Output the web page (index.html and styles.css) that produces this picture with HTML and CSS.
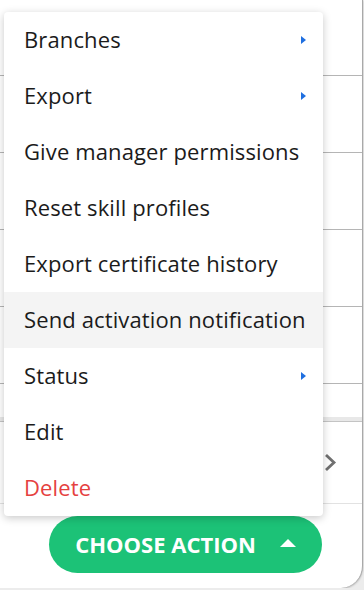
FILE: index.html
```html
<!DOCTYPE html>
<html lang="en">
<head>
    <meta charset="UTF-8">
    <meta name="viewport" content="width=device-width, initial-scale=1.0">
    <title>Choose action</title>
    <link rel="stylesheet" href="styles.css">
</head>
<body>

    <div class="screen">
        <!-- Table rows behind the menu -->
        <div class="table">
            <div class="table-row"></div>
            <div class="table-row"></div>
            <div class="table-row"></div>
            <div class="table-row"></div>
            <div class="table-row"></div>
        </div>
        <div class="table-tail"></div>
        <div class="strip"></div>

        <!-- Bottom card -->
        <div class="card">
            <div class="card-row">
                <svg class="chevron" width="13" height="19" viewBox="0 0 13 19">
                    <path d="M2 2 L10 9.5 L2 17" fill="none" stroke="#707070" stroke-width="2.8"/>
                </svg>
            </div>
            <div class="card-footer">
                <button class="action-btn">
                    <span>CHOOSE ACTION</span>
                    <svg class="caret-up" width="16" height="8" viewBox="0 0 16 8">
                        <path d="M0 8 L8 0 L16 8 Z" fill="#fff"/>
                    </svg>
                </button>
            </div>
        </div>

        <!-- Action menu -->
        <ul class="menu">
            <li class="menu-item has-sub">Branches<span class="sub-arrow"></span></li>
            <li class="menu-item has-sub">Export<span class="sub-arrow"></span></li>
            <li class="menu-item">Give manager permissions</li>
            <li class="menu-item">Reset skill profiles</li>
            <li class="menu-item">Export certificate history</li>
            <li class="menu-item active">Send activation notification</li>
            <li class="menu-item has-sub">Status<span class="sub-arrow"></span></li>
            <li class="menu-item">Edit</li>
            <li class="menu-item danger">Delete</li>
        </ul>
    </div>

</body>
</html>
```

FILE: styles.css
```css
/* Global Styles */
body {
    margin: 0;
    background-color: #ececec;
    font-family: 'Open Sans', sans-serif;
}

.screen {
    position: relative;
    width: 362px;
    height: 588px;
    background-color: #ffffff;
    border-right: 1px solid #a9a9a9;
    border-bottom-right-radius: 22px;
    box-shadow: 0 1px 2px rgba(0, 0, 0, 0.25);
    overflow: hidden;
}

/* Table behind */
.table {
    margin-top: -1px;
}

.table-row {
    height: 77px;
    box-sizing: border-box;
    border-bottom: 1px solid #b5b5b5;
}

.table-tail {
    height: 33px;
}

.strip {
    height: 4px;
    background-color: #e8e8e8;
}

/* Bottom card */
.card {
    border-top: 1px solid #c4c4c4;
}

.card-row {
    height: 81px;
    border-bottom: 1px solid #e2e2e2;
    display: flex;
    align-items: center;
    justify-content: flex-end;
    padding-right: 25px;
}

.card-footer {
    display: flex;
    justify-content: flex-end;
    padding: 12px 40px 0 0;
}

.action-btn {
    width: 273px;
    height: 57px;
    border: none;
    border-radius: 29px;
    background-color: #1cc277;
    color: #ffffff;
    font-family: 'Open Sans', sans-serif;
    font-size: 22px;
    font-weight: 700;
    display: flex;
    align-items: center;
    justify-content: center;
    gap: 24px;
    padding: 0 0 2px 0;
}

.caret-up {
    margin-top: -1px;
}

/* Action menu */
.menu {
    position: absolute;
    top: 12px;
    left: 4px;
    width: 319px;
    margin: 0;
    padding: 0;
    list-style: none;
    background-color: #ffffff;
    border-radius: 4px;
    box-shadow: 0 2px 8px rgba(0, 0, 0, 0.22);
}

.menu-item {
    height: 56px;
    box-sizing: border-box;
    display: flex;
    align-items: center;
    justify-content: space-between;
    padding: 0 17px 2px 20px;
    font-size: 22px;
    letter-spacing: 0.12px;
    color: #1b1b1b;
}

.menu-item.active {
    background-color: #f4f4f4;
}

.menu-item.danger {
    color: #e5413f;
}

.sub-arrow {
    margin-top: 2px;
    width: 0;
    height: 0;
    border-top: 4.5px solid transparent;
    border-bottom: 4.5px solid transparent;
    border-left: 5px solid #1f6fe0;
}
```
